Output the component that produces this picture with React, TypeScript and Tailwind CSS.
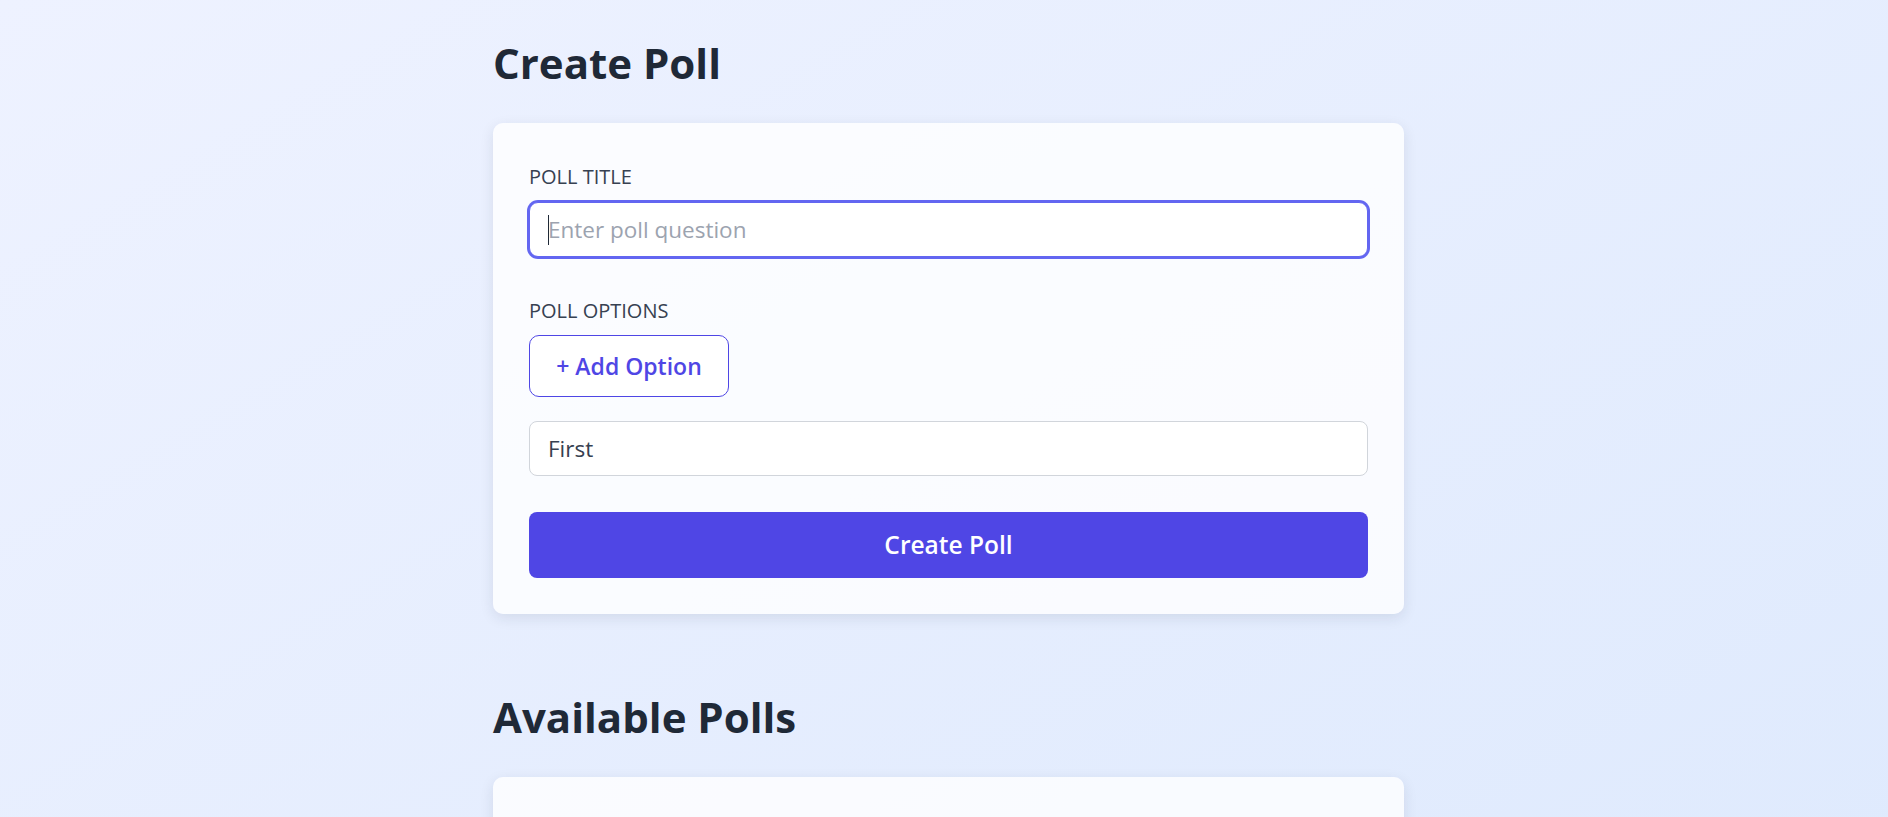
import React from "react";

export default function App() {
  return (
    <div
      className="min-h-screen w-full bg-gradient-to-br from-[#eef2ff] to-[#dde9fd]"
      style={{ fontFamily: '"Open Sans", "Noto Sans", Arial, sans-serif' }}
    >
      <div className="flex justify-center pl-[9px]">
        <div className="w-[911px] pt-[38px] pb-10">
          <h1 className="text-[42px] leading-[50px] font-bold text-[#1f2937]">Create Poll</h1>

          <div className="mt-[35px] rounded-[10px] bg-white/80 px-[36px] pt-[42px] pb-[36px] shadow-[0_4px_14px_rgba(30,41,59,0.10)]">
            <label className="block text-[20px] leading-[24px] font-medium uppercase text-[#374151]">
              Poll Title
            </label>
            <div className="relative mt-[13px]">
              <input
                type="text"
                placeholder="Enter poll question"
                className="h-[55px] w-full rounded-[9px] border border-[#6366f1] bg-white px-[18px] text-[22.5px] text-[#374151] outline-none ring-2 ring-[#6366f1] placeholder:text-[#9ca3af]"
              />
              <span className="pointer-events-none absolute left-[19px] top-[13px] h-[30px] w-px bg-[#1f2937]" />
            </div>

            <label className="mt-[42px] block text-[20px] leading-[24px] font-medium uppercase text-[#374151]">
              Poll Options
            </label>
            <button className="mt-[12px] flex h-[62px] w-[200px] items-center justify-center rounded-[10px] border-[1.5px] border-[#4f46e5] bg-white text-[23px] font-semibold text-[#4f46e5]">
              + Add Option
            </button>

            <input
              type="text"
              defaultValue="First"
              className="mt-[24px] block h-[55px] w-full rounded-[8px] border border-[#d1d5db] bg-white px-[18px] text-[22.5px] text-[#374151] outline-none"
            />

            <button className="mt-[36px] flex h-[66px] w-full items-center justify-center rounded-[8px] bg-[#4f46e5] text-[24.5px] font-semibold text-white">
              Create Poll
            </button>
          </div>

          <h2 className="mt-[78px] text-[42px] leading-[50px] font-bold text-[#1f2937]">Available Polls</h2>

          <div className="mt-[35px] h-[300px] rounded-[10px] bg-white/80 shadow-[0_4px_14px_rgba(30,41,59,0.10)]" />
        </div>
      </div>
    </div>
  );
}
